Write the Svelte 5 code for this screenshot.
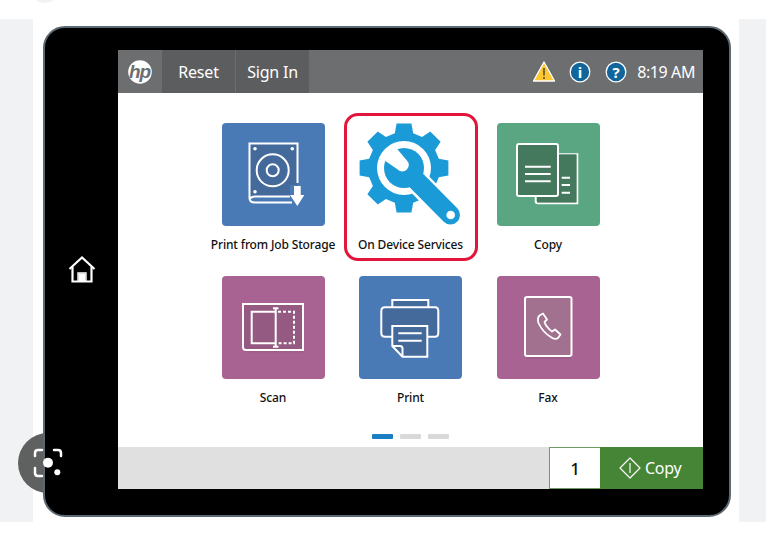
<script>
    // 8 tooth gear for the On Device Services tile
    function gearPath(cx, cy, outer, root, teeth) {
        let pts = [];
        let step = (Math.PI * 2) / teeth;
        for (let i = 0; i < teeth; i++) {
            let a = i * step - Math.PI / 2;
            let pairs = [
                [root, a - step * 0.33],
                [outer, a - step * 0.21],
                [outer, a + step * 0.21],
                [root, a + step * 0.33],
            ];
            for (let p of pairs) {
                pts.push((cx + p[0] * Math.cos(p[1])).toFixed(1) + " " + (cy + p[0] * Math.sin(p[1])).toFixed(1));
            }
        }
        return "M" + pts.join("L") + "Z";
    }

    let gear = gearPath(45, 45, 45, 36, 8);

    let tiles = [
        { name: "Print from Job Storage", icon: "storage", color: "blue" },
        { name: "On Device Services", icon: "gear", color: "none" },
        { name: "Copy", icon: "copy", color: "green" },
        { name: "Scan", icon: "scan", color: "purple" },
        { name: "Print", icon: "print", color: "blue" },
        { name: "Fax", icon: "fax", color: "purple" },
    ];
</script>

<div class="page">
    <div class="arc"></div>
    <div class="lens"></div>
    <div class="strip"></div>

    <div class="tablet">
        <div class="bezel">
            <svg width="28" height="27" viewBox="0 0 28 27" fill="none" stroke="#fff" stroke-width="2.2">
                <path d="M1.5 13 14 1.5 26.5 13" />
                <path d="M4.5 11V25.5H23.5V11" />
                <path d="M10.5 25V17.5H17.5V25" fill="#fff" stroke="none" />
                <path d="M10 25.5V17H18V25.5" stroke-width="1.4" />
            </svg>
        </div>

        <div class="screen">
            <div class="header">
                <div class="logo">
                    <svg width="26" height="26" viewBox="0 0 26 26">
                        <circle cx="13" cy="13" r="11.800" fill="#fff" />
                        <text x="12.600" y="18.800" class="hp">hp</text>
                    </svg>
                </div>
                <div class="hbtn">Reset</div>
                <div class="hbtn">Sign In</div>
                <div class="status">
                    <svg class="warn" width="24" height="23" viewBox="0 0 24 23">
                        <path d="M12 2 22.5 21H1.5Z" fill="#fdc82f" stroke="#fff" stroke-width="1.4" stroke-linejoin="round" />
                        <path d="M12 8V15.5M12 17V19" stroke="#333" stroke-width="1.3" />
                    </svg>
                    <svg class="info" width="22" height="22" viewBox="0 0 22 22">
                        <circle cx="11" cy="11" r="9.800" fill="#11659b" stroke="#fff" stroke-width="1.3" />
                        <text x="11" y="16.500" class="glyph">i</text>
                    </svg>
                    <svg class="help" width="22" height="22" viewBox="0 0 22 22">
                        <circle cx="11" cy="11" r="9.800" fill="#11659b" stroke="#fff" stroke-width="1.3" />
                        <text x="11" y="16.500" class="glyph">?</text>
                    </svg>
                    <span class="time">8:19 AM</span>
                </div>
            </div>

            <div class="main">
                <div class="grid">
                    {#each tiles as t}
                        <div class="cell" class:selected={t.icon === "gear"}>
                            <div class="tile {t.color}">
                                {#if t.icon === "storage"}
                                    <svg viewBox="0 0 103 103" fill="none" stroke="#fff" stroke-width="2">
                                        <path d="M27 20H75.500V62H68V73H33Q27 74 27 79V20Z" fill="#44699b" stroke="none" />
                                        <path d="M70 79.500H33Q27.500 79.500 27.500 75V20.500H75.500V60" />
                                        <path d="M28 76Q29 73.500 33 73.500H68" />
                                        <circle cx="50.700" cy="47.300" r="16" />
                                        <circle cx="50.700" cy="47.300" r="6" />
                                        <circle cx="33" cy="25.700" r="1.800" fill="#fff" stroke="none" />
                                        <circle cx="70.300" cy="25.700" r="1.800" fill="#fff" stroke="none" />
                                        <circle cx="33" cy="68.700" r="1.800" fill="#fff" stroke="none" />
                                        <path d="M72 63H78.700V72H82.300L75.300 83 68 72H72Z" fill="#fff" stroke="none" />
                                    </svg>
                                {:else if t.icon === "gear"}
                                    <svg viewBox="0 0 103 103">
                                        <path d={gear} fill="#1a9ad6" />
                                        <circle cx="45" cy="45" r="27" fill="#fff" />
                                        <line x1="45" y1="45" x2="91" y2="92" stroke="#fff" stroke-width="24" />
                                        <circle cx="45" cy="45" r="20" fill="#1a9ad6" />
                                        <line x1="45" y1="45" x2="91.500" y2="92" stroke="#1a9ad6" stroke-width="19" stroke-linecap="round" />
                                        <path d="M38.700 46.600A6.500 6.500 0 0 0 47.900 37.400L34 21 22 35Z" fill="#fff" />
                                        <circle cx="91.700" cy="92" r="4.300" fill="#fff" />
                                    </svg>
                                {:else if t.icon === "copy"}
                                    <svg viewBox="0 0 103 103" fill="#45795d" stroke="#fff" stroke-width="2">
                                        <path d="M38.700 74V78Q38.700 80.300 41 80.300H80.300V31.300H61" />
                                        <path d="M61 31.300H79.500V79.500H61Z" stroke="none" />
                                        <path d="M40 73H61V79.500H40Z" stroke="none" />
                                        <rect x="20" y="21" width="41" height="52" rx="2" />
                                        <path d="M28 43.700H53.700M28 51H53.700M28 58.300H53.700M64.700 54.700H73M64.700 62H73M64.700 69.700H73" />
                                    </svg>
                                {:else if t.icon === "scan"}
                                    <svg viewBox="0 0 103 103" fill="none" stroke="#fff" stroke-width="2">
                                        <rect x="22" y="29" width="60" height="47.500" fill="#955d83" stroke="none" opacity=".6" />
                                        <path d="M21 28H81V74H24Q21 74 21 71Z" fill="#945a81" />
                                        <path d="M53.700 35.700H29.700V67.300H53.700" />
                                        <path d="M51 32.300H56.500M53.700 32.300V70.700M51 70.700H56.500" />
                                        <path d="M56 35.700H72V67.300H56" stroke-dasharray="3 2" />
                                    </svg>
                                {:else if t.icon === "print"}
                                    <svg viewBox="0 0 103 103" fill="none" stroke="#fff" stroke-width="2">
                                        <path d="M33.300 31.300V24H69.300V31.300" fill="#44699b" />
                                        <path d="M33 60.700H26Q22.300 60.700 22.300 57V35Q22.300 31.300 26 31.300H76Q79.300 31.300 79.300 35V57Q79.300 60.700 76 60.700H69" fill="#44699b" />
                                        <path d="M33.300 50H68.300V80.700H43.500L33.300 70Z" fill="#44699b" />
                                        <path d="M33.300 70H41Q43.500 70 43.500 72.500V80.700" />
                                        <path d="M39.300 57.300H62.700M39.300 64.700H62.700" />
                                    </svg>
                                {:else if t.icon === "fax"}
                                    <svg viewBox="0 0 103 103" fill="none" stroke="#fff" stroke-width="2">
                                        <rect x="29" y="24" width="46" height="59" rx="2" fill="#955a82" opacity=".6" stroke="none" />
                                        <rect x="28" y="21" width="46.500" height="59" rx="2" fill="#a1718f" />
                                        <path d="M42.500 39.500 46 37.500 50 43.500 47.500 46Q49 51 55 55.500L58 53.500 63.500 58.500 61 62Q58.500 64 54.500 61.500 45.500 56 41.500 47 40 42 42.500 39.500Z" stroke-width="1.800" stroke-linejoin="round" />
                                    </svg>
                                {/if}
                            </div>
                            <div class="label">{t.name}</div>
                        </div>
                    {/each}
                </div>
                <div class="dots">
                    <span class="dot on"></span>
                    <span class="dot"></span>
                    <span class="dot"></span>
                </div>
            </div>

            <div class="footer">
                <div class="count">1</div>
                <div class="start">
                    <svg width="22" height="22" viewBox="0 0 22 22" fill="none" stroke="#fff" stroke-width="1.200">
                        <path d="M11 1 21 11 11 21 1 11Z" stroke-linejoin="round" />
                        <path d="M11 6V16" />
                    </svg>
                    <span>Copy</span>
                </div>
            </div>
        </div>
    </div>

    <div class="strip right"></div>

    <svg class="lensicon" width="32" height="32" viewBox="0 0 32 32" fill="none" stroke="#fff" stroke-width="2.500" stroke-linecap="round">
        <path d="M3 9V6Q3 3 6 3H10M22 3H26Q29 3 29 6V9M3 21V26Q3 29 6 29H10" />
        <circle cx="16" cy="15.700" r="5" fill="#fff" stroke="none" />
        <circle cx="25.300" cy="25.300" r="3" fill="#fff" stroke="none" />
    </svg>
</div>

<style>
    :global(body) {
        margin: 0;
        background: #fff;
        font-family: "Noto Sans", "Open Sans", sans-serif;
    }
    .page {
        position: relative;
        display: flex;
        width: 766px;
        height: 547px;
        overflow: hidden;
        background: #fff;
    }
    .strip {
        width: 33px;
        height: 503px;
        margin-top: 19px;
        background: #f1f2f4;
    }
    .strip.right {
        width: 27px;
        margin-left: 8px;
    }
    .arc {
        position: absolute;
        left: 30px;
        top: -27px;
        width: 30px;
        height: 30px;
        border-radius: 50%;
        background: #f1f2f4;
    }
    .lens {
        position: absolute;
        left: 18px;
        top: 433px;
        width: 60px;
        height: 60px;
        border-radius: 50%;
        background: #5f6060;
    }
    .lensicon {
        position: absolute;
        left: 32px;
        top: 447px;
    }
    .tablet {
        position: relative;
        box-sizing: border-box;
        display: flex;
        width: 688px;
        height: 491px;
        margin-top: 26px;
        margin-left: 10px;
        padding: 22px 26px 26px 0;
        background: #000;
        border: 2px solid #5d6972;
        border-radius: 22px;
    }
    .bezel {
        display: flex;
        align-items: center;
        justify-content: center;
        width: 73px;
    }
    .screen {
        display: flex;
        flex-direction: column;
        flex: 1;
        background: #fff;
    }
    .header {
        display: flex;
        height: 43px;
        color: #fff;
        background: #6d6e70;
        font-size: 16px;
    }
    .logo {
        display: flex;
        align-items: center;
        justify-content: center;
        width: 44px;
    }
    .hp {
        font-family: "Liberation Sans", sans-serif;
        font-style: italic;
        font-weight: bold;
        font-size: 19px;
        letter-spacing: -1px;
        text-anchor: middle;
        fill: #6d6e70;
    }
    .hbtn {
        display: flex;
        align-items: center;
        justify-content: center;
        width: 73px;
        margin-right: 1px;
        background: #5c5d5f;
        letter-spacing: -0.2px;
    }
    .status {
        display: flex;
        align-items: center;
        margin-left: auto;
        padding-right: 8px;
    }
    .time {
        letter-spacing: -0.4px;
    }
    .glyph {
        font-size: 15px;
        font-weight: bold;
        text-anchor: middle;
        fill: #fff;
    }
    .warn {
        margin-right: 13px;
    }
    .info {
        margin-right: 14px;
    }
    .help {
        margin-right: 10px;
    }
    .main {
        display: flex;
        flex-direction: column;
        align-items: center;
        flex: 1;
        padding-top: 30px;
    }
    .grid {
        display: grid;
        grid-template-columns: repeat(3, 103px);
        grid-auto-rows: 153px;
        column-gap: 34.5px;
    }
    .cell {
        position: relative;
        display: flex;
        flex-direction: column;
        align-items: center;
    }
    .cell.selected::after {
        content: "";
        position: absolute;
        left: -15px;
        right: -16px;
        top: -10px;
        bottom: 15px;
        border: 3px solid #e4153a;
        border-radius: 14px;
    }
    .tile {
        width: 103px;
        height: 103px;
        border-radius: 4px;
    }
    .tile svg {
        display: block;
        width: 103px;
        height: 103px;
    }
    .blue {
        background: #4a7ab5;
    }
    .green {
        background: #5aa682;
    }
    .purple {
        background: #a96393;
    }
    .label {
        padding-top: 11px;
        font-size: 12px;
        font-weight: 500;
        line-height: 16px;
        letter-spacing: -0.15px;
        white-space: nowrap;
        color: #111;
    }
    .dots {
        display: flex;
        gap: 7px;
        margin-top: 5px;
    }
    .dot {
        width: 20.7px;
        height: 5px;
        border-radius: 1px;
        background: #d9d9d9;
    }
    .dot.on {
        background: #1a7ec2;
    }
    .footer {
        display: flex;
        justify-content: flex-end;
        height: 42px;
        background: #e0e0e0;
    }
    .count {
        box-sizing: border-box;
        display: flex;
        align-items: center;
        justify-content: center;
        width: 51px;
        border: 1px solid #6f9c62;
        border-right: 0;
        background: #fff;
        color: #111;
        font-size: 17px;
        font-weight: 500;
    }
    .start {
        display: flex;
        align-items: center;
        gap: 4px;
        width: 103px;
        padding-left: 19px;
        box-sizing: border-box;
        background: #458535;
        color: #fff;
        font-size: 16px;
        letter-spacing: -0.3px;
    }
</style>
